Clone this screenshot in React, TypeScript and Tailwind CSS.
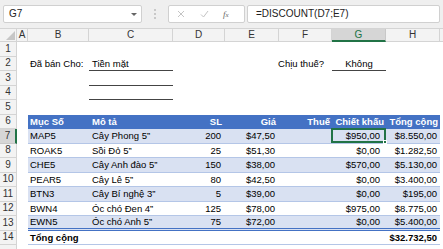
import React from 'react'

// Bảng tính kiểu Excel: thanh công thức + lưới ô với bảng được định dạng

const COLS = 'grid grid-cols-[17px_11px_61px_84px_52px_54px_53px_54px_54px_1fr]'
const LETTERS = ['A', 'B', 'C', 'D', 'E', 'F', 'G', 'H']

const items = [
  ['MAP5', 'Cây Phong 5”', '200', '$47,50', '', '$950,00', '$8.550,00'],
  ['ROAK5', 'Sồi Đỏ 5”', '25', '$51,30', '', '$0,00', '$1.282,50'],
  ['CHE5', 'Cây Anh đào 5”', '150', '$38,00', '', '$570,00', '$5.130,00'],
  ['PEAR5', 'Cây Lê 5”', '80', '$42,50', '', '$0,00', '$3.400,00'],
  ['BTN3', 'Cây Bí nghệ 3”', '5', '$39,00', '', '$0,00', '$195,00'],
  ['BWN4', 'Óc chó Đen 4”', '125', '$78,00', '', '$975,00', '$8.775,00'],
  ['EWN5', 'Óc chó Anh 5”', '75', '$72,00', '', '$0,00', '$5.400,00'],
]

function RowHead({ n, active }: { n?: number; active?: boolean }) {
  return (
    <div
      className={`flex items-center justify-center border-b border-r text-[10px] text-[#333] ${
        active
          ? 'bg-[#d6d6d6] border-r-2 border-r-[#217346] border-b-[#c8c8c8]'
          : 'bg-[#f3f3f3] border-[#d4d4d4]'
      }`}
    >
      {n}
    </div>
  )
}

export default function App() {
  return (
    <div className="w-[443px] h-[249px] overflow-hidden bg-white text-black font-['Liberation_Sans',Arial,sans-serif] text-[9.5px] leading-none">
      {/* Formula bar */}
      <div className="h-[29px] bg-[#efefef] flex items-center gap-[2px] px-[3px] border-b border-[#d4d4d4]">
        <div className="w-[139px] h-[18px] bg-white border border-[#d0d0d0] rounded-[2px] flex items-center justify-between pl-[5px] pr-[4px]">
          <span className="text-[10px] text-[#222]">G7</span>
          <span className="w-0 h-0 border-l-[3px] border-r-[3px] border-t-[3px] border-l-transparent border-r-transparent border-t-[#666]" />
        </div>
        <div className="w-[22px] flex flex-col items-center gap-[2px]">
          <span className="w-[2px] h-[2px] bg-[#bbb] rounded-full" />
          <span className="w-[2px] h-[2px] bg-[#bbb] rounded-full" />
          <span className="w-[2px] h-[2px] bg-[#bbb] rounded-full" />
        </div>
        <div className="w-[77px] h-[18px] bg-white border border-[#d0d0d0] rounded-[2px] flex items-center pl-[8px]">
          <svg width="8" height="8" viewBox="0 0 8 8" className="mr-[15px]">
            <path d="M1 1L7 7M7 1L1 7" stroke="#c4c4c4" strokeWidth="1" />
          </svg>
          <svg width="9" height="8" viewBox="0 0 9 8" className="mr-[14px]">
            <path d="M1 4.5L3.5 7L8 1" stroke="#c4c4c4" strokeWidth="1" fill="none" />
          </svg>
          <span className="font-['Liberation_Serif',serif] italic text-[9px] text-[#666]">
            f<span className="text-[7px]">x</span>
          </span>
        </div>
        <div className="flex-1 h-[18px] bg-white border border-[#d0d0d0] rounded-[2px] flex items-center pl-[8px]">
          <span className="text-[10px] text-[#222]">=DISCOUNT(D7;E7)</span>
        </div>
      </div>

      {/* Column headers */}
      <div className={`${COLS} h-[13px]`}>
        <div className="bg-[#f3f3f3] border-r border-b border-[#d4d4d4] flex items-end justify-end p-[1px]">
          <svg width="9" height="9" viewBox="0 0 9 9">
            <path d="M9 0L9 9L0 9Z" fill="#c6c6c6" />
          </svg>
        </div>
        {LETTERS.map((l) => (
          <div
            key={l}
            className={`flex items-center justify-center text-[10px] border-r ${
              l === 'G'
                ? 'bg-[#d6d6d6] border-[#c8c8c8] border-b-2 border-b-[#217346] text-[#217346]'
                : 'bg-[#f3f3f3] border-[#d4d4d4] border-b text-[#333]'
            }`}
          >
            {l}
          </div>
        ))}
        <div className="bg-[#f3f3f3] border-b border-[#d4d4d4]" />
      </div>

      {/* Row 1 */}
      <div className={`${COLS} h-[14.5px]`}>
        <RowHead n={1} />
      </div>

      {/* Row 2 */}
      <div className={`${COLS} h-[14.5px]`}>
        <RowHead n={2} />
        <div />
        <div className="flex items-center pl-[2px] whitespace-nowrap">Đã bán Cho:</div>
        <div className="flex items-center pl-[3px] border-b border-[#444]">Tiền mặt</div>
        <div />
        <div />
        <div className="flex items-center justify-end pr-[8px] whitespace-nowrap">Chịu thuế?</div>
        <div className="flex items-center justify-center border-b border-[#444]">Không</div>
      </div>

      {/* Rows 3-5 */}
      {[3, 4, 5].map((n) => (
        <div key={n} className={`${COLS} h-[14.5px]`}>
          <RowHead n={n} />
          <div />
          <div />
          <div className={n < 5 ? 'border-b border-[#444]' : ''} />
        </div>
      ))}

      {/* Row 6: table header */}
      <div className={`${COLS} h-[14.5px]`}>
        <RowHead n={6} />
        <div />
        <div className="bg-[#4472c4] text-white font-bold flex items-center pl-[2px]">Mục Số</div>
        <div className="bg-[#4472c4] text-white font-bold flex items-center pl-[3px]">Mô tả</div>
        <div className="bg-[#4472c4] text-white font-bold flex items-center justify-end pr-[3px]">SL</div>
        <div className="bg-[#4472c4] text-white font-bold flex items-center justify-end pr-[3px]">Giá</div>
        <div className="bg-[#4472c4] text-white font-bold flex items-center justify-end pr-[2px]">Thuế</div>
        <div className="bg-[#4472c4] text-white font-bold flex items-center justify-end pr-[2px] whitespace-nowrap">Chiết khấu</div>
        <div className="bg-[#4472c4] text-white font-bold flex items-center justify-end pr-[2px] whitespace-nowrap">Tổng cộng</div>
      </div>

      {/* Rows 7-13: data */}
      {items.map((r, i) => {
        const band = i % 2 === 0 ? 'bg-[#d9e1f2]' : 'bg-white'
        const last = i === items.length - 1
        const line = last ? 'border-b-[3px] border-double border-[#4472c4]' : 'border-b border-[#b4c6e7]'
        const cell = `${band} ${line} flex items-center`
        return (
          <div key={r[0]} className={`${COLS} h-[14.5px]`}>
            <RowHead n={7 + i} active={i === 0} />
            <div />
            <div className={`${cell} pl-[2px]`}>{r[0]}</div>
            <div className={`${cell} pl-[3px] whitespace-nowrap`}>{r[1]}</div>
            <div className={`${cell} justify-end pr-[4px]`}>{r[2]}</div>
            <div className={`${cell} pl-[21px]`}>{r[3]}</div>
            <div className={cell}>{r[4]}</div>
            <div className={`${cell} justify-end pr-[6px] relative`}>
              {r[5]}
              {i === 0 && (
                <span className="absolute -left-[1px] -top-[1px] right-0 bottom-0 border-2 border-[#217346]">
                  <span className="absolute -right-[3px] -bottom-[3px] w-[4px] h-[4px] bg-[#217346] border border-white" />
                </span>
              )}
            </div>
            <div className={`${cell} justify-end pr-[3px]`}>{r[6]}</div>
          </div>
        )
      })}

      {/* Row 14: total */}
      <div className={`${COLS} h-[14.5px]`}>
        <RowHead n={14} />
        <div />
        <div className="flex items-center pl-[2px] font-bold whitespace-nowrap border-b border-[#b4c6e7]">Tổng cộng</div>
        <div className="border-b border-[#b4c6e7]" />
        <div className="border-b border-[#b4c6e7]" />
        <div className="border-b border-[#b4c6e7]" />
        <div className="border-b border-[#b4c6e7]" />
        <div className="border-b border-[#b4c6e7]" />
        <div className="flex items-center justify-end pr-[3px] font-bold border-b border-[#b4c6e7]">$32.732,50</div>
      </div>

      {/* Row 15 (partial, number hidden below the edge) */}
      <div className={`${COLS} h-[14.5px]`}>
        <RowHead />
      </div>
    </div>
  )
}
